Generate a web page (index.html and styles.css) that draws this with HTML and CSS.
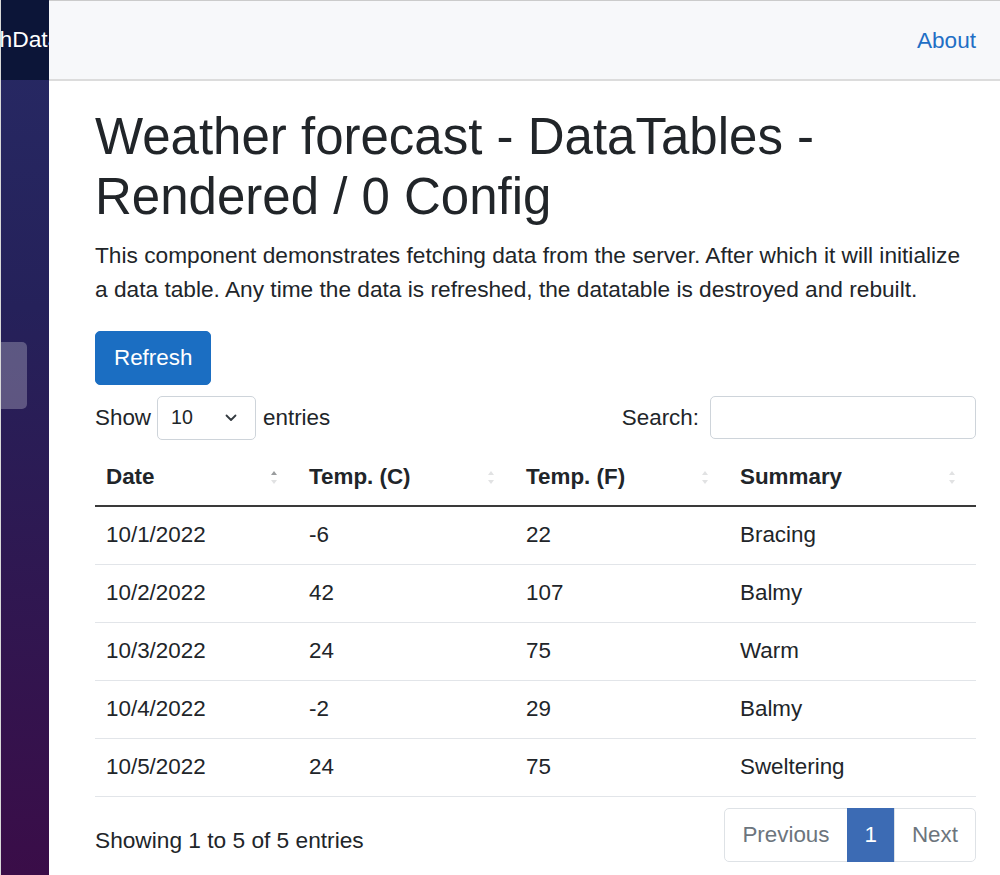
FILE: index.html
```html
<!DOCTYPE html>
<html>
<head>
  <meta charset="UTF-8">
  <title>Weather forecast</title>
  <link rel="stylesheet" href="styles.css">
</head>
<body>
  <div class="page">
    <div class="sidebar">
      <div class="brand-row">
        <span class="brand">BlazorWithDataTables</span>
      </div>
      <nav class="nav">
        <div class="nav-link active"></div>
      </nav>
    </div>

    <main class="main">
      <div class="top-row">
        <a href="#">About</a>
      </div>

      <article class="content">
        <h1>Weather forecast - DataTables - Rendered / 0 Config</h1>
        <p>This component demonstrates fetching data from the server. After which it will initialize a data table. Any time the data is refreshed, the datatable is destroyed and rebuilt.</p>

        <button class="btn">Refresh</button>

        <div class="dt-top">
          <label class="dt-length">
            Show
            <span class="select">
              <span>10</span>
              <svg width="12" height="8" viewBox="0 0 12 8"><path d="M1.5 1.5 L6 6 L10.5 1.5" fill="none" stroke="#343a40" stroke-width="1.8" stroke-linecap="round" stroke-linejoin="round"/></svg>
            </span>
            entries
          </label>
          <label class="dt-search">
            Search:
            <input type="search">
          </label>
        </div>

        <table class="dt-table">
          <colgroup>
            <col class="col-date">
            <col class="col-c">
            <col class="col-f">
            <col class="col-sum">
          </colgroup>
          <thead>
            <tr>
              <th class="sorting sorting-asc">Date</th>
              <th class="sorting">Temp. (C)</th>
              <th class="sorting">Temp. (F)</th>
              <th class="sorting">Summary</th>
            </tr>
          </thead>
          <tbody>
            <tr><td>10/1/2022</td><td>-6</td><td>22</td><td>Bracing</td></tr>
            <tr><td>10/2/2022</td><td>42</td><td>107</td><td>Balmy</td></tr>
            <tr><td>10/3/2022</td><td>24</td><td>75</td><td>Warm</td></tr>
            <tr><td>10/4/2022</td><td>-2</td><td>29</td><td>Balmy</td></tr>
            <tr><td>10/5/2022</td><td>24</td><td>75</td><td>Sweltering</td></tr>
          </tbody>
        </table>

        <div class="dt-bottom">
          <div class="dt-info">Showing 1 to 5 of 5 entries</div>
          <ul class="pagination">
            <li class="page-item disabled"><span class="page-link">Previous</span></li>
            <li class="page-item active"><span class="page-link">1</span></li>
            <li class="page-item disabled"><span class="page-link">Next</span></li>
          </ul>
        </div>
      </article>
    </main>
  </div>
</body>
</html>
```

FILE: styles.css
```css
html, body {
  margin: 0;
  height: 875px;
  overflow: hidden;
}
body {
  font-family: "Liberation Sans", Arial, sans-serif;
  font-size: 22.4px;
  line-height: 33.6px;
  color: #212529;
  background-color: #fff;
}
.page {
  display: flex;
  height: 875px;
}

/* sidebar */
.sidebar {
  width: 48px;
  flex-shrink: 0;
  border-left: 1px solid #d9d9d9;
  background-image: linear-gradient(180deg, #272a65 0%, #25215a 35%, #3a0d48 100%);
  display: flex;
  flex-direction: column;
  overflow: hidden;
}
.brand-row {
  height: 80px;
  flex-shrink: 0;
  background-color: #0c1538;
  display: flex;
  align-items: center;
  overflow: hidden;
}
.brand {
  white-space: nowrap;
  color: #fff;
  font-size: 22.8px;
  margin-left: -99px;
}
.nav {
  padding-top: 262px;
}
.nav-link {
  width: 26px;
  height: 67px;
  border-radius: 0 5px 5px 0;
}
.nav-link.active {
  background-color: rgba(255,255,255,0.25);
}

/* main */
.main {
  flex: 1;
  min-width: 0;
}
.top-row {
  height: 77px;
  border-top: 1px solid #cbcbcb;
  border-bottom: 2px solid #dcdcdc;
  background-color: #f7f8fa;
  display: flex;
  align-items: center;
  justify-content: flex-end;
  padding-right: 24px;
  padding-top: 1px;
  box-sizing: content-box;
}
.top-row a {
  color: #1f6fc5;
  text-decoration: none;
  font-size: 22.6px;
}
.content {
  padding: 26px 24px 0 46px;
}
h1 {
  font-size: 51px;
  line-height: 60px;
  font-weight: 500;
  margin: 0 0 11px;
}
p {
  font-size: 22.7px;
  line-height: 34px;
  margin: 0 0 25px;
}
.btn {
  display: block;
  font-family: inherit;
  font-size: 22.4px;
  line-height: 33.6px;
  padding: 9px 18px;
  border: 1px solid #1b6ec2;
  border-radius: 5px;
  background-color: #1b6ec2;
  color: #fff;
}

/* datatable controls */
.dt-top {
  display: flex;
  justify-content: space-between;
  align-items: center;
  height: 44px;
  margin-top: 11px;
}
.dt-length, .dt-search {
  display: flex;
  align-items: center;
  gap: 7px;
}
.select {
  display: flex;
  align-items: center;
  justify-content: space-between;
  box-sizing: border-box;
  width: 99px;
  height: 44px;
  padding: 0 18px 0 13px;
  margin-left: -1px;
  border: 1px solid #ced4da;
  border-radius: 5px;
  font-size: 19.6px;
}
.dt-search input {
  box-sizing: border-box;
  width: 266px;
  height: 43px;
  margin-left: 4px;
  border: 1px solid #ced4da;
  border-radius: 5px;
}

.dt-table {
  width: 881px;
  margin-top: 8px;
  border-collapse: collapse;
  table-layout: fixed;
}
.col-date { width: 203px; }
.col-c { width: 217px; }
.col-f { width: 214px; }
.col-sum { width: 247px; }
.dt-table th {
  position: relative;
  text-align: left;
  font-weight: bold;
  padding: 12px 11px;
  border-bottom: 2px solid #3a3a3a;
}
.dt-table td {
  line-height: 34px;
  padding: 11px 11px 12px;
  border-bottom: 1px solid #e2e5e9;
}

/* sort arrows */
.sorting::before, .sorting::after {
  content: "";
  position: absolute;
  right: 21px;
  width: 0;
  height: 0;
  border-left: 3.5px solid transparent;
  border-right: 3.5px solid transparent;
}
.sorting::before {
  top: 23px;
  border-bottom: 4px solid #e1e2e3;
}
.sorting::after {
  top: 32px;
  border-top: 4px solid #e1e2e3;
}
.sorting-asc::before {
  border-bottom-color: #9a9c9e;
}

.dt-bottom {
  display: flex;
  justify-content: space-between;
  align-items: flex-start;
  margin-top: 11px;
}
.dt-info {
  font-size: 22.7px;
  padding-top: 16px;
}
.pagination {
  display: flex;
  list-style: none;
  margin: 0;
  padding: 0;
}
.page-link {
  display: block;
  padding: 9px 17px;
  border: 1px solid #dee2e6;
  margin-left: -1px;
  color: #6c757d;
  background-color: #fff;
}
.page-item:first-child .page-link {
  border-radius: 5px 0 0 5px;
  margin-left: 0;
}
.page-item:last-child .page-link {
  border-radius: 0 5px 5px 0;
}
.page-item.active .page-link {
  background-color: #3c6bb4;
  border-color: #3c6bb4;
  color: #fff;
}
```
